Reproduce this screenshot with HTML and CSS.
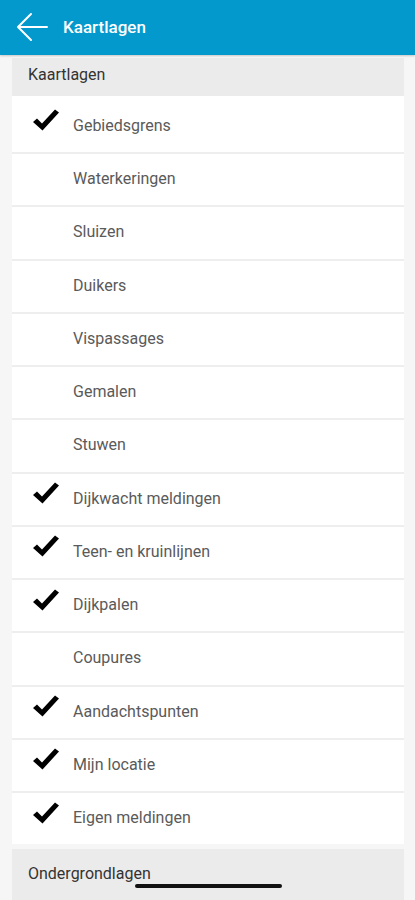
FILE: index.html
```html
<!DOCTYPE html>
<html lang="nl">
<head>
  <meta charset="UTF-8" />
  <meta name="viewport" content="width=device-width, initial-scale=1.0"/>
  <title>Kaartlagen</title>
  <link rel="stylesheet" href="styles.css">
</head>
<body>

  <!-- Balk bovenaan -->
  <div class="appbar">
    <svg class="terug" width="32" height="30" viewBox="0 0 32 30">
      <path d="M2 15 H31 M2 15 L15 2 M2 15 L15 28" fill="none" stroke="#fff" stroke-width="2" stroke-linecap="round"/>
    </svg>
    <span class="titel">Kaartlagen</span>
  </div>

  <!-- Kaartlagen -->
  <div class="kaart">
    <div class="sectie">Kaartlagen</div>
    <div class="rij eerste"><span class="vink"><svg width="26" height="22" viewBox="0 0 26 22"><path d="M0 13 L4 9.5 L9 14.5 L22 0.5 L26 3.5 L9.5 21.5 Z" fill="#000"/></svg></span>Gebiedsgrens</div>
    <div class="rij"><span class="vink"></span>Waterkeringen</div>
    <div class="rij"><span class="vink"></span>Sluizen</div>
    <div class="rij"><span class="vink"></span>Duikers</div>
    <div class="rij"><span class="vink"></span>Vispassages</div>
    <div class="rij"><span class="vink"></span>Gemalen</div>
    <div class="rij"><span class="vink"></span>Stuwen</div>
    <div class="rij"><span class="vink"><svg width="26" height="22" viewBox="0 0 26 22"><path d="M0 13 L4 9.5 L9 14.5 L22 0.5 L26 3.5 L9.5 21.5 Z" fill="#000"/></svg></span>Dijkwacht meldingen</div>
    <div class="rij"><span class="vink"><svg width="26" height="22" viewBox="0 0 26 22"><path d="M0 13 L4 9.5 L9 14.5 L22 0.5 L26 3.5 L9.5 21.5 Z" fill="#000"/></svg></span>Teen- en kruinlijnen</div>
    <div class="rij"><span class="vink"><svg width="26" height="22" viewBox="0 0 26 22"><path d="M0 13 L4 9.5 L9 14.5 L22 0.5 L26 3.5 L9.5 21.5 Z" fill="#000"/></svg></span>Dijkpalen</div>
    <div class="rij"><span class="vink"></span>Coupures</div>
    <div class="rij"><span class="vink"><svg width="26" height="22" viewBox="0 0 26 22"><path d="M0 13 L4 9.5 L9 14.5 L22 0.5 L26 3.5 L9.5 21.5 Z" fill="#000"/></svg></span>Aandachtspunten</div>
    <div class="rij"><span class="vink"><svg width="26" height="22" viewBox="0 0 26 22"><path d="M0 13 L4 9.5 L9 14.5 L22 0.5 L26 3.5 L9.5 21.5 Z" fill="#000"/></svg></span>Mijn locatie</div>
    <div class="rij laatste"><span class="vink"><svg width="26" height="22" viewBox="0 0 26 22"><path d="M0 13 L4 9.5 L9 14.5 L22 0.5 L26 3.5 L9.5 21.5 Z" fill="#000"/></svg></span>Eigen meldingen</div>
  </div>

  <!-- Ondergrondlagen -->
  <div class="kaart">
    <div class="sectie groot">Ondergrondlagen</div>
  </div>

  <div class="thuisbalk"></div>
</body>
</html>
```

FILE: styles.css
```css
body {
  margin: 0;
  font-family: Roboto, "Noto Sans", sans-serif;
  background-color: #f6f6f6;
  height: 900px;
  overflow: hidden;
}
.appbar {
  height: 55px;
  background: #0399cd;
  display: flex;
  align-items: center;
  padding-left: 16px;
  box-shadow: 0 1px 2px rgba(0, 0, 0, 0.2);
}
.terug {
  margin-right: 15px;
  margin-top: -2px;
}
.titel {
  color: #fff;
  font-size: 17px;
  font-weight: 500;
  margin-top: -2px;
}
.kaart {
  background: white;
  margin: 3px 11px 0 12px;
}
.kaart + .kaart {
  margin-top: 5px;
}
.sectie {
  background: #ebebeb;
  height: 38px;
  line-height: 34px;
  padding-left: 16px;
  font-size: 16px;
  color: #333;
}
.sectie.groot {
  height: 56px;
  line-height: 50px;
}
.rij {
  border-bottom: 2px solid #eeeeee;
  display: flex;
  align-items: center;
  padding-bottom: 2px;
  box-sizing: content-box;
  font-size: 16px;
  color: #5a5a5a;
  height: 49.25px;
}
.rij.eerste {
  padding-top: 4px;
  height: 50px;
}
.rij.laatste {
  border-bottom: none;
}
.vink {
  width: 26px;
  height: 22px;
  margin-left: 21px;
  margin-right: 14px;
  margin-top: -10px;
  display: flex;
}
.thuisbalk {
  position: fixed;
  left: 135px;
  top: 884px;
  width: 147px;
  height: 4px;
  border-radius: 2px;
  background: #111;
}
```
